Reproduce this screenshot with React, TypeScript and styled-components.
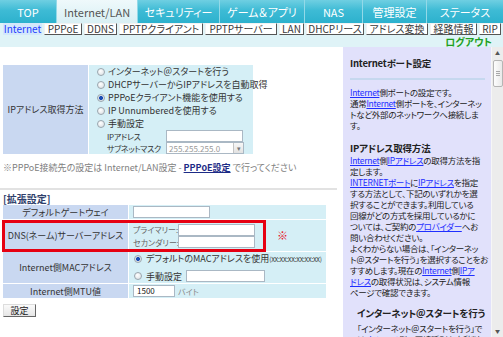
import styled, { createGlobalStyle, css } from "styled-components";

const GlobalStyle = createGlobalStyle`
  html, body { margin: 0; padding: 0; background: #fff; }
  body {
    font-family: "Noto Sans CJK JP", "Noto Sans", sans-serif;
    font-feature-settings: "palt";
    color: #333;
  }
  * { box-sizing: border-box; }
`;

const topTabs = [
  { label: "TOP", w: 57 },
  { label: "Internet/LAN", w: 81, active: true },
  { label: "セキュリティー", w: 82 },
  { label: "ゲーム＆アプリ", w: 85 },
  { label: "NAS", w: 58 },
  { label: "管理設定", w: 64 },
  { label: "ステータス", w: 76 },
];

const subTabs = [
  { label: "Internet", w: 39, active: true },
  { label: "PPPoE", w: 38 },
  { label: "DDNS", w: 33 },
  { label: "PPTPクライアント", w: 84 },
  { label: "PPTPサーバー", w: 72 },
  { label: "LAN", w: 25 },
  { label: "DHCPリース", w: 58 },
  { label: "アドレス変換", w: 62 },
  { label: "経路情報", w: 47 },
  { label: "RIP", w: 22 },
];

const App = () => {
  return (
    <Page>
      <GlobalStyle />
      <TopNav>
        {topTabs.map((t) => (
          <TopTab key={t.label} $w={t.w} $active={t.active}>
            {t.label}
          </TopTab>
        ))}
      </TopNav>
      <SubNav>
        <SubTabs>
          {subTabs.map((t) => (
            <SubTab key={t.label} $w={t.w} $active={t.active}>
              {t.label}
            </SubTab>
          ))}
        </SubTabs>
        <Logout>ログアウト</Logout>
      </SubNav>

      <Body>
        <Main>
          <FormTable>
            <FormRow $cols="85px 164px" $h={89}>
              <LabelCell>IPアドレス取得方法</LabelCell>
              <ValueCell $pl={8}>
                <Option>
                  <Radio />
                  <span>インターネット＠スタートを行う</span>
                </Option>
                <Option>
                  <Radio />
                  <span>DHCPサーバーからIPアドレスを自動取得</span>
                </Option>
                <Option>
                  <Radio $checked />
                  <span>PPPoEクライアント機能を使用する</span>
                </Option>
                <Option>
                  <Radio />
                  <span>IP Unnumberedを使用する</span>
                </Option>
                <Option>
                  <Radio />
                  <span>手動設定</span>
                </Option>
                <Field>
                  <FieldLabel $w={59}>IPアドレス</FieldLabel>
                  <TextBox $w={77} />
                </Field>
                <Field>
                  <FieldLabel $w={59}>サブネットマスク</FieldLabel>
                  <SelectBox>
                    <span>255.255.255.0</span>
                    <SelectButton>▾</SelectButton>
                  </SelectBox>
                </Field>
              </ValueCell>
            </FormRow>
          </FormTable>

          <Note>
            ※PPPoE接続先の設定は Internet/LAN設定 - <NoteLink>PPPoE設定</NoteLink> で行ってください
          </Note>

          <Divider />
          <SectionTitle>[拡張設定]</SectionTitle>

          <FormTable>
            <FormRow $cols="125px 197px" $h={14}>
              <LabelCell>デフォルトゲートウェイ</LabelCell>
              <ValueCell $pl={4} $row>
                <TextBox $w={77} />
              </ValueCell>
            </FormRow>
            <FormRow $cols="125px 197px" $h={31}>
              <LabelCell>DNS(ネーム)サーバーアドレス</LabelCell>
              <ValueCell $pl={4} $row>
                <DnsLines>
                  <Field>
                    <FieldLabel $w={45} $small>プライマリー:</FieldLabel>
                    <TextBox $w={77} />
                  </Field>
                  <Field>
                    <FieldLabel $w={45} $small>セカンダリー:</FieldLabel>
                    <TextBox $w={77} />
                  </Field>
                </DnsLines>
                <Mark>※</Mark>
              </ValueCell>
              <Highlight />
            </FormRow>
            <FormRow $cols="125px 197px" $h={31}>
              <LabelCell>Internet側MACアドレス</LabelCell>
              <ValueCell $pl={5}>
                <Option $h={13} $gap={4}>
                  <Radio $checked />
                  <span>
                    デフォルトのMACアドレスを使用<Tiny>(XX:XX:XX:XX:XX:XX)</Tiny>
                  </span>
                </Option>
                <Option $h={18} $gap={4} $pt={4}>
                  <Radio />
                  <span>手動設定</span>
                  <TextBox $w={79} />
                </Option>
              </ValueCell>
            </FormRow>
            <FormRow $cols="125px 197px" $h={14}>
              <LabelCell>Internet側MTU値</LabelCell>
              <ValueCell $pl={4} $row>
                <TextBox $w={42}>1500</TextBox>
                <Unit>バイト</Unit>
              </ValueCell>
            </FormRow>
          </FormTable>

          <SubmitButton>設定</SubmitButton>
        </Main>

        <Side>
          <Help>
            <HelpTitle>Internetポート設定</HelpTitle>
            <HelpRule />
            <HelpText $mt={6.5}>
              <A>Internet</A>側ポートの設定です。
              <br />
              通常<A>Internet</A>側ポートを、インターネッ
              <br />
              トなど外部のネットワークへ接続しま
              <br />
              す。
            </HelpText>
            <HelpTitle $mt={11.5}>IPアドレス取得方法</HelpTitle>
            <HelpText $mt={0.5}>
              <A>Internet</A>側<A>IPアドレス</A>の取得方法を指
              <br />
              定します。
              <br />
              <A>INTERNETポート</A>に<A>IPアドレス</A>を指定
              <br />
              する方法として、下記のいずれかを選
              <br />
              択することができます。利用している
              <br />
              回線がどの方式を採用しているかに
              <br />
              ついては、ご契約の<A>プロバイダー</A>へお
              <br />
              問い合わせください。
              <br />
              よくわからない場合は、「インターネッ
              <br />
              ト＠スタートを行う」を選択することをお
              <br />
              すすめします。現在の<A>Internet</A>側<A>IPア</A>
              <br />
              <A>ドレス</A>の取得状況は、システム情報
              <br />
              ページで確認できます。
            </HelpText>
            <HelpTitle $mt={9.5} $indent>
              インターネット＠スタートを行う
            </HelpTitle>
            <HelpText $mt={3.5} $indent>
              「インターネット＠スタートを行う」で
              <br />
              は、<A>Internet</A>側の回線種別を自動判
            </HelpText>
          </Help>
          <ScrollBar>
            <ScrollArrow>▲</ScrollArrow>
            <Thumb>
              <Grip />
            </Thumb>
            <ScrollSpace />
            <ScrollArrow>▼</ScrollArrow>
          </ScrollBar>
        </Side>
      </Body>
    </Page>
  );
};

export default App;

const Page = styled.div`
  width: 503px;
  height: 337px;
  overflow: hidden;
  display: flex;
  flex-direction: column;
`;

const TopNav = styled.nav`
  display: flex;
  height: 23px;
  flex: none;
  background: linear-gradient(to bottom, #6fcfe2 0%, #3ebbd5 45%, #2cb1cd 100%);
`;

const TopTab = styled.div<{ $w: number; $active?: boolean }>`
  width: ${(p) => p.$w}px;
  display: flex;
  align-items: center;
  justify-content: center;
  font-size: 11px;
  line-height: 14px;
  color: #fff;
  border-right: 1px solid #93d9e8;
  &:last-child {
    border-right: none;
  }
  ${(p) =>
    p.$active &&
    css`
      background: linear-gradient(to bottom, #eff9fb, #d8eff4);
      color: #555;
    `}
`;

const SubNav = styled.div`
  height: 24px;
  flex: none;
  background: #dff3f7;
  padding-left: 3px;
`;

const SubTabs = styled.div`
  display: flex;
  gap: 2px;
  height: 12px;
`;

const SubTab = styled.div<{ $w: number; $active?: boolean }>`
  width: ${(p) => p.$w}px;
  height: 12px;
  display: flex;
  align-items: center;
  justify-content: center;
  font-size: 10px;
  line-height: 1;
  white-space: nowrap;
  color: #3a3a3a;
  background: #fff;
  border: 1px solid;
  border-color: #f2f2f2 #555 #555 #f2f2f2;
  ${(p) =>
    p.$active &&
    css`
      background: #d3e8fb;
      color: #1f3cff;
      border-color: #d3e8fb;
    `}
`;

const Logout = styled.div`
  text-align: right;
  padding: 1px 11px 0 0;
  font-size: 10px;
  font-weight: bold;
  line-height: 11px;
  color: #1f9f1f;
`;

const Body = styled.div`
  flex: 1;
  display: flex;
  min-height: 0;
`;

const Main = styled.main`
  width: 343px;
  flex: none;
  padding: 18px 0 0 3px;
  font-size: 9px;
  line-height: 11px;
`;

const FormTable = styled.div`
  display: flex;
  flex-direction: column;
  gap: 1px;
`;

const FormRow = styled.div<{ $cols: string; $h: number }>`
  position: relative;
  display: grid;
  grid-template-columns: ${(p) => p.$cols};
  column-gap: 1px;
  height: ${(p) => p.$h}px;
`;

const LabelCell = styled.div`
  background: #c9d8f1;
  display: flex;
  align-items: center;
  justify-content: center;
  white-space: nowrap;
  color: #333;
`;

const ValueCell = styled.div<{ $pl: number; $row?: boolean }>`
  background: #d5eff6;
  padding-left: ${(p) => p.$pl}px;
  display: flex;
  flex-direction: ${(p) => (p.$row ? "row" : "column")};
  ${(p) => p.$row && "align-items: center;"}
  color: #333;
`;

const Option = styled.div<{ $h?: number; $gap?: number; $pt?: number }>`
  display: flex;
  align-items: center;
  gap: ${(p) => p.$gap ?? 3}px;
  height: ${(p) => p.$h ?? 13}px;
  padding-top: ${(p) => p.$pt ?? 0}px;
  white-space: nowrap;
  flex: none;
`;

const Radio = styled.span<{ $checked?: boolean }>`
  width: 8px;
  height: 8px;
  flex: none;
  border-radius: 50%;
  border: 1px solid #9aa6ae;
  background: ${(p) =>
    p.$checked
      ? "radial-gradient(circle, #1b4db5 0 1.7px, #dfe5ea 2.3px)"
      : "radial-gradient(circle at 40% 35%, #fff, #d6dce0)"};
`;

const Field = styled.div`
  display: flex;
  align-items: center;
  height: 12px;
  padding-left: 10px;
  white-space: nowrap;
  flex: none;
`;

const FieldLabel = styled.span<{ $w: number; $small?: boolean }>`
  width: ${(p) => p.$w}px;
  flex: none;
  font-size: 8px;
  letter-spacing: -0.3px;
  ${(p) => p.$small && "color: #666; letter-spacing: 0;"}
`;

const TextBox = styled.div<{ $w: number }>`
  width: ${(p) => p.$w}px;
  height: 12px;
  flex: none;
  background: #fff;
  border: 1px solid #aab8c4;
  font-size: 8px;
  line-height: 10px;
  padding-left: 3px;
  color: #222;
`;

const SelectBox = styled.div`
  width: 78px;
  height: 12px;
  display: flex;
  align-items: center;
  justify-content: space-between;
  background: #fff;
  border: 1px solid #aab8c4;
  font-size: 8px;
  color: #999;
  padding-left: 2px;
`;

const SelectButton = styled.span`
  width: 10px;
  height: 10px;
  display: flex;
  align-items: center;
  justify-content: center;
  background: linear-gradient(#f7f7f7, #e2e2e2);
  border-left: 1px solid #c4c4c4;
  font-size: 7px;
  color: #777;
`;

const Note = styled.div`
  margin-top: 7px;
  line-height: 13px;
  color: #808080;
  white-space: nowrap;
`;

const NoteLink = styled.a`
  color: #1d2b86;
  font-weight: bold;
  text-decoration: underline;
`;

const Divider = styled.hr`
  margin: 14px 0 0 -3px;
  width: 337px;
  height: 2px;
  border: none;
  background: #e2e2e2;
`;

const SectionTitle = styled.div`
  margin-top: 3px;
  font-size: 10px;
  line-height: 12px;
  font-weight: bold;
  color: #2f3f6c;
`;

const DnsLines = styled.div`
  display: flex;
  flex-direction: column;
  padding-top: 1px;
  width: 127px;
  & > div {
    padding-left: 0;
    height: 12.5px;
  }
`;

const Mark = styled.span`
  margin-left: 17px;
  font-size: 11px;
  color: #e8101c;
`;

const Highlight = styled.div`
  position: absolute;
  left: -1px;
  top: 0;
  width: 264px;
  height: 32px;
  border: 3px solid #e60012;
  pointer-events: none;
`;

const Tiny = styled.span`
  font-size: 6.5px;
  letter-spacing: -0.3px;
`;

const Unit = styled.span`
  margin-left: 3px;
  font-size: 8px;
  color: #888;
`;

const SubmitButton = styled.button`
  display: block;
  margin-top: 6px;
  width: 33px;
  height: 13px;
  padding: 0;
  font-family: inherit;
  font-size: 9px;
  line-height: 11px;
  color: #222;
  background: linear-gradient(#fafafa, #e6e6e6);
  border: 1px solid;
  border-color: #ddd #666 #666 #ddd;
`;

const Side = styled.aside`
  flex: 1;
  display: flex;
  min-width: 0;
`;

const Help = styled.div`
  width: 148px;
  flex: none;
  overflow: hidden;
  background: #e1e1fb;
  padding: 10px 6px 0 7px;
  font-size: 8.5px;
  letter-spacing: -0.3px;
  color: #222;
`;

const HelpTitle = styled.div<{ $mt?: number; $indent?: boolean }>`
  margin-top: ${(p) => p.$mt ?? 0}px;
  padding-left: ${(p) => (p.$indent ? 7 : 0)}px;
  font-size: 9.5px;
  letter-spacing: -0.2px;
  font-weight: bold;
  line-height: 12px;
  white-space: nowrap;
`;

const HelpRule = styled.div`
  margin-top: 9px;
  height: 2px;
  background: #c6d8ef;
`;

const HelpText = styled.p<{ $mt?: number; $indent?: boolean }>`
  margin: ${(p) => p.$mt ?? 0}px 0 0;
  padding-left: ${(p) => (p.$indent ? 7 : 0)}px;
  line-height: 11px;
  white-space: nowrap;
`;

const A = styled.a`
  color: #1f2fff;
  text-decoration: underline;
`;

const ScrollBar = styled.div`
  flex: 1;
  display: flex;
  flex-direction: column;
  align-items: center;
  background: #ececec;
  border-left: 1px solid #f6f6f6;
`;

const ScrollArrow = styled.div`
  height: 12px;
  font-size: 5px;
  line-height: 12px;
  color: #555;
`;

const Thumb = styled.div`
  width: 10px;
  height: 27px;
  margin-top: 1px;
  display: flex;
  align-items: center;
  justify-content: center;
  border: 1px solid #b5b5b5;
  border-radius: 2px;
  background: linear-gradient(to right, #fdfdfd, #e9e9e9);
`;

const Grip = styled.div`
  width: 4px;
  height: 5px;
  background: repeating-linear-gradient(to bottom, #a8a8a8 0 1px, transparent 1px 2px);
`;

const ScrollSpace = styled.div`
  flex: 1;
`;
